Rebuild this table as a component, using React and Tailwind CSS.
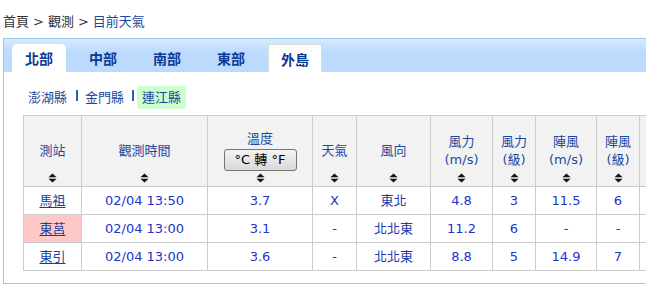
import React from "react";

const SortIcon = () => (
  <svg width="9" height="10" viewBox="0 0 9 10" className="block">
    <polygon points="0.5,4.2 4.5,0.5 8.5,4.2" fill="#111" />
    <polygon points="0.5,5.8 8.5,5.8 4.5,9.5" fill="#111" />
  </svg>
);

const Th = ({ children, w, noIcon }) => (
  <th className={`relative border border-[#cccccc] bg-[#f2f2f2] p-0 align-middle font-normal text-[#1a4aa0] ${w || ""}`}>
    <div className="flex flex-col items-center justify-center leading-[18px]">{children}</div>
    {!noIcon && (
      <div className="absolute bottom-[3px] left-0 right-0 flex justify-center">
        <SortIcon />
      </div>
    )}
  </th>
);

const rows = [
  { st: "馬祖", t: "02/04 13:50", temp: "3.7", w: "X", dir: "東北", ms: "4.8", lv: "3", gms: "11.5", glv: "6", hl: false },
  { st: "東莒", t: "02/04 13:00", temp: "3.1", w: "-", dir: "北北東", ms: "11.2", lv: "6", gms: "-", glv: "-", hl: true },
  { st: "東引", t: "02/04 13:00", temp: "3.6", w: "-", dir: "北北東", ms: "8.8", lv: "5", gms: "14.9", glv: "7", hl: false },
];

const Td = ({ children, className = "" }) => (
  <td className={`border border-[#cccccc] p-0 text-center align-middle ${className}`}>{children}</td>
);

export default function App() {
  return (
    <div className="w-[646px] h-[292px] overflow-hidden bg-white font-['DejaVu_Sans','Noto_Sans_CJK_TC',sans-serif] text-[13px]">
      <div className="h-[38px] pl-[3px] pt-[14px] leading-[16px] text-[#333333]">
        <span>首頁</span>
        <span className="mx-[4px] text-[#3a3a3a]">&gt;</span>
        <span>觀測</span>
        <span className="mx-[4px] text-[#3a3a3a]">&gt;</span>
        <span className="text-[#1a4a9c]">目前天氣</span>
      </div>
      <div className="ml-[3px] w-[720px] h-[246px] border border-[#9cc6ec]">
        <div className="flex h-[33px] items-end gap-[10px] bg-gradient-to-b from-[#d8eafd] via-[#bcdafe] via-40% to-[#badafe] pl-[8px]">
          {["北部", "中部", "南部", "東部", "外島"].map((t, i) => (
            <div
              key={t}
              className={`flex h-[28px] w-[54px] items-center justify-center pt-[3px] text-[14px] font-bold text-[#0b3a92] ${
                i === 0 ? "rounded-t-[5px] bg-white" : i === 4 ? "border-x border-t border-[#dcdcdc] bg-white" : ""
              }`}
            >
              {t}
            </div>
          ))}
        </div>
        <div className="flex h-[43px] items-start pl-[24px] pt-[14px] text-[#17479c]">
          <div className="flex h-[23px] items-center">
            <span>澎湖縣</span>
            <span className="ml-[9px] mr-[7px] mb-[4px] h-[11px] w-[2px] bg-[#2d5fb0]" />
            <span>金門縣</span>
            <span className="ml-[8px] mr-[3px] mb-[4px] h-[11px] w-[2px] bg-[#2d5fb0]" />
            <span className="flex h-[23px] items-center rounded-[3px] bg-[#ccffcc] px-[5px]">連江縣</span>
          </div>
        </div>
        <div className="pl-[19px]">
          <table className="table-fixed border-collapse w-[696px]">
            <colgroup>
              <col className="w-[58px]" />
              <col className="w-[126px]" />
              <col className="w-[105px]" />
              <col className="w-[44px]" />
              <col className="w-[74px]" />
              <col className="w-[62px]" />
              <col className="w-[43px]" />
              <col className="w-[61px]" />
              <col className="w-[43px]" />
              <col className="w-[80px]" />
            </colgroup>
            <thead>
              <tr className="h-[71px]">
                <Th><span>測站</span></Th>
                <Th><span>觀測時間</span></Th>
                <Th>
                  <span className="pb-[1px]">溫度</span>
                  <button className="mt-[0px] mb-[2px] h-[22px] w-[73px] rounded-[3px] border border-[#767676] bg-gradient-to-b from-[#f4f4f4] to-[#d9d9d9] text-[13px] leading-[20px] text-black">
                    °C 轉 °F
                  </button>
                </Th>
                <Th><span>天氣</span></Th>
                <Th><span>風向</span></Th>
                <Th><span>風力</span><span>(m/s)</span></Th>
                <Th><span>風力</span><span>(級)</span></Th>
                <Th><span>陣風</span><span>(m/s)</span></Th>
                <Th><span>陣風</span><span>(級)</span></Th>
                <Th noIcon></Th>
              </tr>
            </thead>
            <tbody className="text-[#2235c8]">
              {rows.map((r) => (
                <tr key={r.st} className="h-[28px]">
                  <Td className={r.hl ? "bg-[#ffc8c8]" : ""}>
                    <span className="text-[#17409e] underline underline-offset-2">{r.st}</span>
                  </Td>
                  <Td>{r.t}</Td>
                  <Td>{r.temp}</Td>
                  <Td>{r.w}</Td>
                  <Td className="text-[#1a3aa8]">{r.dir}</Td>
                  <Td>{r.ms}</Td>
                  <Td>{r.lv}</Td>
                  <Td>{r.gms}</Td>
                  <Td>{r.glv}</Td>
                  <Td></Td>
                </tr>
              ))}
            </tbody>
          </table>
        </div>
      </div>
    </div>
  );
}
